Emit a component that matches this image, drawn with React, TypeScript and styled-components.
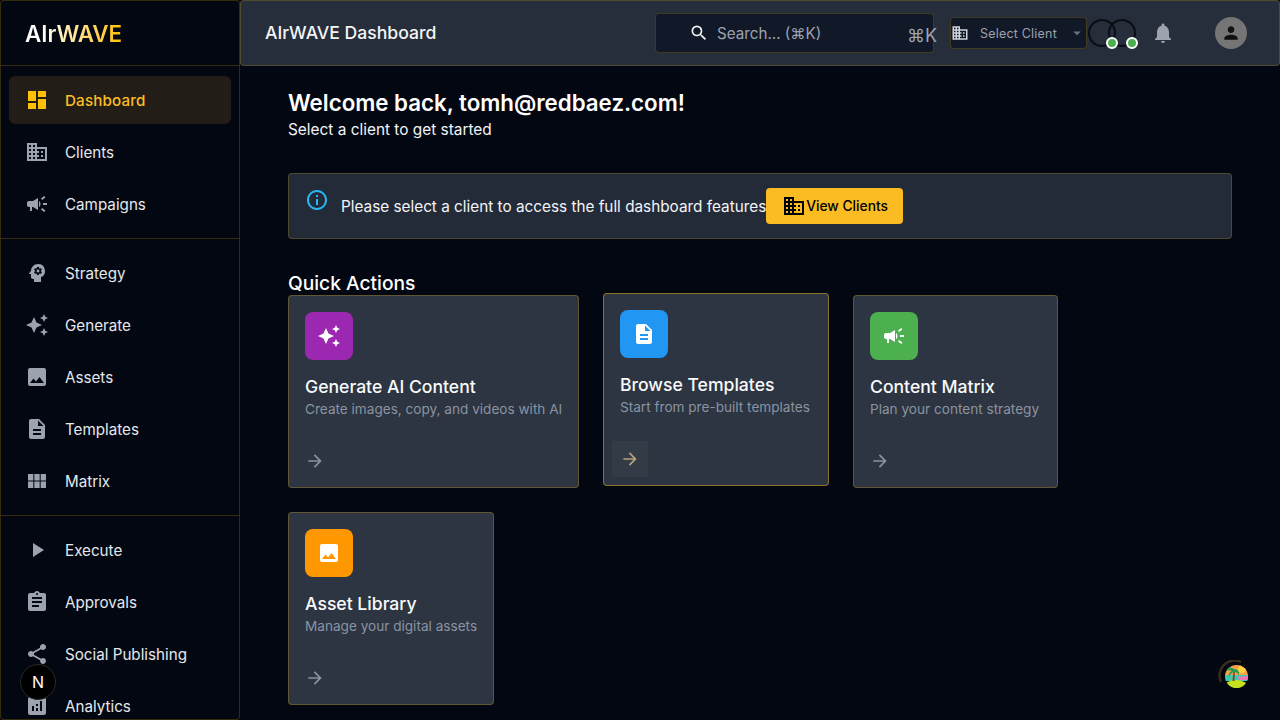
import React from 'react';
import styled, { createGlobalStyle } from 'styled-components';
import {
  MdAnalytics,
  MdArrowDropDown,
  MdArrowForward,
  MdAssignment,
  MdAutoAwesome,
  MdBusiness,
  MdCampaign,
  MdDashboard,
  MdDescription,
  MdImage,
  MdInfoOutline,
  MdNotifications,
  MdPerson,
  MdPlayArrow,
  MdPsychology,
  MdSearch,
  MdShare,
  MdViewModule,
} from 'react-icons/md';

const gold = 'rgba(255, 193, 7, 0.2)';

const GlobalStyle = createGlobalStyle`
  html, body {
    margin: 0;
    height: 100%;
    overflow: hidden;
    background: #030712;
    font-family: Inter, "Liberation Sans", sans-serif;
    color: #ffffff;
  }
  * { box-sizing: border-box; }
`;

const navGroups = [
  [
    { label: 'Dashboard', icon: MdDashboard, active: true },
    { label: 'Clients', icon: MdBusiness },
    { label: 'Campaigns', icon: MdCampaign },
  ],
  [
    { label: 'Strategy', icon: MdPsychology },
    { label: 'Generate', icon: MdAutoAwesome },
    { label: 'Assets', icon: MdImage },
    { label: 'Templates', icon: MdDescription },
    { label: 'Matrix', icon: MdViewModule },
  ],
  [
    { label: 'Execute', icon: MdPlayArrow },
    { label: 'Approvals', icon: MdAssignment },
    { label: 'Social Publishing', icon: MdShare },
    { label: 'Analytics', icon: MdAnalytics },
  ],
];

const actions = [
  { title: 'Generate AI Content', text: 'Create images, copy, and videos with AI', color: '#9c27b0', icon: MdAutoAwesome, width: 291 },
  { title: 'Browse Templates', text: 'Start from pre-built templates', color: '#2196f3', icon: MdDescription, width: 226, hovered: true },
  { title: 'Content Matrix', text: 'Plan your content strategy', color: '#4caf50', icon: MdCampaign, width: 205 },
  { title: 'Asset Library', text: 'Manage your digital assets', color: '#ff9800', icon: MdImage, width: 206 },
];

const Shell = styled.div`
  display: flex;
  width: 1280px;
  height: 720px;
  overflow: hidden;
`;

const Sidebar = styled.aside`
  flex: 0 0 240px;
  height: 720px;
  overflow: hidden;
  border: 1px solid ${gold};
  border-radius: 4px;
  background: #030712;
`;

const Brand = styled.div`
  height: 65px;
  display: flex;
  align-items: center;
  padding-left: 24px;
  border-bottom: 1px solid ${gold};
`;

const BrandName = styled.span`
  font-size: 22.4px;
  font-weight: 600;
  background: linear-gradient(90deg, #ffffff 15%, #ffc107 100%);
  -webkit-background-clip: text;
  background-clip: text;
  color: transparent;
`;

const NavGroup = styled.nav`
  display: flex;
  flex-direction: column;
  gap: 4px;
  padding: 10px 8px;
  border-bottom: 1px solid ${gold};
  &:last-child { border-bottom: 0; }
`;

const NavItem = styled.a<{ $active?: boolean }>`
  flex: none;
  height: 48px;
  padding: 0 16px;
  display: flex;
  align-items: center;
  gap: 16px;
  border-radius: 6px;
  font-size: 15.2px;
  font-weight: ${(p) => (p.$active ? 500 : 400)};
  letter-spacing: ${(p) => (p.$active ? '0.15px' : '0')};
  background: ${(p) => (p.$active ? '#231d17' : 'transparent')};
  color: ${(p) => (p.$active ? '#fbbf24' : '#e5e7eb')};
  svg {
    flex: none;
    width: 24px;
    height: 24px;
    color: ${(p) => (p.$active ? '#ffc107' : '#9ca3af')};
  }
`;

const Page = styled.div`
  flex: 1;
  min-width: 0;
  display: flex;
  flex-direction: column;
`;

const TopBar = styled.header`
  height: 66px;
  flex: none;
  display: flex;
  align-items: center;
  padding: 0 24px;
  background: #262e3b;
  border: 1px solid ${gold};
  border-radius: 4px;
`;

const PageTitle = styled.h1`
  margin: 0 auto 2px 0;
  font-size: 17.6px;
  font-weight: 500;
  color: #f3f4f6;
`;

const SearchBox = styled.div`
  width: 279px;
  height: 40px;
  margin-right: 16px;
  padding-left: 33px;
  display: flex;
  align-items: center;
  gap: 8px;
  background: #111827;
  border: 1px solid ${gold};
  border-radius: 4px;
  font-size: 15.2px;
  color: #9ca3af;
  svg { width: 20px; height: 20px; color: #f3f4f6; }
`;

const Shortcut = styled.span`
  margin-left: auto;
  margin-right: -4px;
  margin-top: 4px;
  font-size: 18px;
  color: #9ca3af;
`;

const ClientSelect = styled.div`
  width: 137px;
  height: 32px;
  margin-right: 1px;
  display: flex;
  align-items: center;
  background: #111827;
  border: 1px solid ${gold};
  border-radius: 4px;
  font-size: 12.5px;
  letter-spacing: 0.2px;
  color: #9ca3af;
  svg:first-child { width: 18px; height: 18px; margin-right: 11px; color: #d1d5db; }
  svg:last-child { width: 18px; height: 18px; margin-left: auto; color: #6b7280; }
`;

const Rings = styled.div`
  display: flex;
  margin-right: 7px;
`;

const Ring = styled.div`
  position: relative;
  width: 28px;
  height: 28px;
  border: 2px solid #0a0d14;
  border-radius: 50%;
  & + & { margin-left: -8px; }
`;

const StatusDot = styled.span`
  position: absolute;
  z-index: 1;
  right: -4px;
  bottom: -4px;
  width: 12px;
  height: 12px;
  background: #4caf50;
  border: 2px solid #ffffff;
  border-radius: 50%;
`;

const IconSlot = styled.div`
  width: 40px;
  height: 40px;
  margin-right: 32px;
  display: flex;
  align-items: center;
  justify-content: center;
  color: #9ca3af;
  svg { width: 24px; height: 24px; }
`;

const Avatar = styled.div`
  width: 32px;
  height: 32px;
  margin-right: 8px;
  display: flex;
  align-items: center;
  justify-content: center;
  border-radius: 50%;
  background: #757575;
  color: #111111;
  svg { width: 20px; height: 20px; }
`;

const Content = styled.main`
  flex: 1;
  padding: 23px 48px 0;
  background: #030712;
`;

const Welcome = styled.h2`
  margin: 0;
  font-size: 22.3px;
  line-height: 28px;
  font-weight: 600;
  color: #ffffff;
`;

const Subtitle = styled.p`
  margin: 1px 0 31px;
  font-size: 15.4px;
  line-height: 24px;
  color: #f3f4f6;
`;

const Alert = styled.section`
  height: 66px;
  padding: 14px 16px;
  display: flex;
  align-items: flex-start;
  background: #232b39;
  border: 1px solid ${gold};
  border-radius: 4px;
  margin-bottom: 32px;
`;

const AlertIcon = styled(MdInfoOutline)`
  flex: none;
  width: 24px;
  height: 24px;
  margin-right: 12px;
  color: #29b6f6;
`;

const AlertText = styled.span`
  margin-top: 7px;
  font-size: 15.32px;
  line-height: 24px;
  color: #f3f4f6;
`;

const PrimaryButton = styled.button`
  width: 137px;
  height: 36px;
  padding: 0 16px;
  display: flex;
  align-items: center;
  border: 0;
  border-radius: 4px;
  background: #fbbc23;
  color: #000000;
  font-family: inherit;
  font-size: 13.8px;
  font-weight: 500;
  white-space: nowrap;
  svg { width: 24px; height: 24px; flex: none; }
`;

const SectionTitle = styled.h3`
  margin: 0;
  font-size: 19.2px;
  line-height: 24px;
  font-weight: 500;
  color: #ffffff;
`;

const CardWrap = styled.div`
  display: flex;
  flex-wrap: wrap;
  gap: 24px;
`;

const Card = styled.article<{ $width: number; $hovered?: boolean }>`
  width: ${(p) => p.$width}px;
  display: flex;
  flex-direction: column;
  padding: 16px 16px 0;
  background: #2c3541;
  border: 1px solid ${(p) => (p.$hovered ? 'rgba(255, 193, 7, 0.45)' : 'rgba(255, 193, 7, 0.25)')};
  border-radius: 4px;
  ${(p) => (p.$hovered ? 'transform: translateY(-2px);' : '')}
`;

const IconTile = styled.div<{ $color: string }>`
  width: 48px;
  height: 48px;
  margin-bottom: 16px;
  display: flex;
  align-items: center;
  justify-content: center;
  border-radius: 8px;
  background: ${(p) => p.$color};
  color: #ffffff;
  svg { width: 24px; height: 24px; }
`;

const CardTitle = styled.h4`
  margin: 0 0 0.6px;
  font-size: 17.6px;
  line-height: 22.4px;
  font-weight: 500;
  color: #f9fafb;
`;

const CardText = styled.p`
  margin: 0 0 16px;
  font-size: 13.6px;
  line-height: 20px;
  color: #8b93a1;
  white-space: nowrap;
`;

const ArrowButton = styled.div<{ $hovered?: boolean }>`
  width: 36px;
  height: 36px;
  margin: 8px 0 8px -8px;
  display: flex;
  align-items: center;
  justify-content: center;
  background: ${(p) => (p.$hovered ? 'rgba(255, 255, 255, 0.03)' : 'transparent')};
  color: ${(p) => (p.$hovered ? '#b3a27c' : '#8b93a1')};
  svg { width: 20px; height: 20px; }
`;

const DevBadge = styled.div`
  position: fixed;
  left: 20px;
  top: 664px;
  width: 36px;
  height: 36px;
  display: flex;
  align-items: center;
  justify-content: center;
  border-radius: 50%;
  background: #000000;
  border: 1px solid #2a2a2a;
  font-size: 16px;
  font-weight: 400;
  color: #ffffff;
`;

const BeachBadge = styled.svg`
  position: fixed;
  left: 1218px;
  top: 660px;
  width: 32px;
  height: 32px;
`;

function BeachLogo() {
  return (
    <BeachBadge viewBox="0 0 32 32">
      <defs>
        <clipPath id="beach">
          <circle cx="18.5" cy="16.5" r="11.5" />
        </clipPath>
      </defs>
      <path d="M3 22 A 15 15 0 0 1 23 2" fill="none" stroke="#4a3c1e" strokeWidth="2.5" opacity="0.75" />
      <g clipPath="url(#beach)">
        <rect x="6" y="4" width="26" height="12" fill="#f7a24b" />
        <circle cx="24" cy="9" r="4" fill="#ffd23f" />
        <rect x="6" y="15" width="26" height="6" fill="#3fc9b0" />
        <path d="M19 17 L 30 16 L 30 20 L 22 20 Z" fill="#f472b6" />
        <ellipse cx="18" cy="27" rx="12" ry="7" fill="#c5e01f" />
        <path d="M14.5 21 L15.5 10 L17 10 L16.5 21 Z" fill="#7c4a1e" />
        <path d="M16 9 Q 11 5 8 11 Q 11 9.5 13.5 11 Q 10.5 13 10.5 17 Q 13.5 13 16 11.5 Q 19 12 21 15 Q 21.5 9 16 9 Z" fill="#1f9d55" />
      </g>
    </BeachBadge>
  );
}

export default function App() {
  return (
    <>
      <GlobalStyle />
      <Shell>
        <Sidebar>
          <Brand>
            <BrandName>AIrWAVE</BrandName>
          </Brand>
          {navGroups.map((group, i) => (
            <NavGroup key={i}>
              {group.map((item) => (
                <NavItem key={item.label} $active={item.active}>
                  <item.icon />
                  {item.label}
                </NavItem>
              ))}
            </NavGroup>
          ))}
        </Sidebar>
        <Page>
          <TopBar>
            <PageTitle>AIrWAVE Dashboard</PageTitle>
            <SearchBox>
              <MdSearch />
              <span>Search... (⌘K)</span>
              <Shortcut>⌘K</Shortcut>
            </SearchBox>
            <ClientSelect>
              <MdBusiness />
              <span>Select Client</span>
              <MdArrowDropDown />
            </ClientSelect>
            <Rings>
              <Ring>
                <StatusDot />
              </Ring>
              <Ring>
                <StatusDot />
              </Ring>
            </Rings>
            <IconSlot>
              <MdNotifications />
            </IconSlot>
            <Avatar>
              <MdPerson />
            </Avatar>
          </TopBar>
          <Content>
            <Welcome>Welcome back, tomh@redbaez.com!</Welcome>
            <Subtitle>Select a client to get started</Subtitle>
            <Alert>
              <AlertIcon />
              <AlertText>Please select a client to access the full dashboard features</AlertText>
              <PrimaryButton>
                <MdBusiness />
                View Clients
              </PrimaryButton>
            </Alert>
            <SectionTitle>Quick Actions</SectionTitle>
            <CardWrap>
              {actions.map((action) => (
                <Card key={action.title} $width={action.width} $hovered={action.hovered}>
                  <IconTile $color={action.color}>
                    <action.icon />
                  </IconTile>
                  <CardTitle>{action.title}</CardTitle>
                  <CardText>{action.text}</CardText>
                  <ArrowButton $hovered={action.hovered}>
                    <MdArrowForward />
                  </ArrowButton>
                </Card>
              ))}
            </CardWrap>
          </Content>
        </Page>
      </Shell>
      <DevBadge>N</DevBadge>
      <BeachLogo />
    </>
  );
}
